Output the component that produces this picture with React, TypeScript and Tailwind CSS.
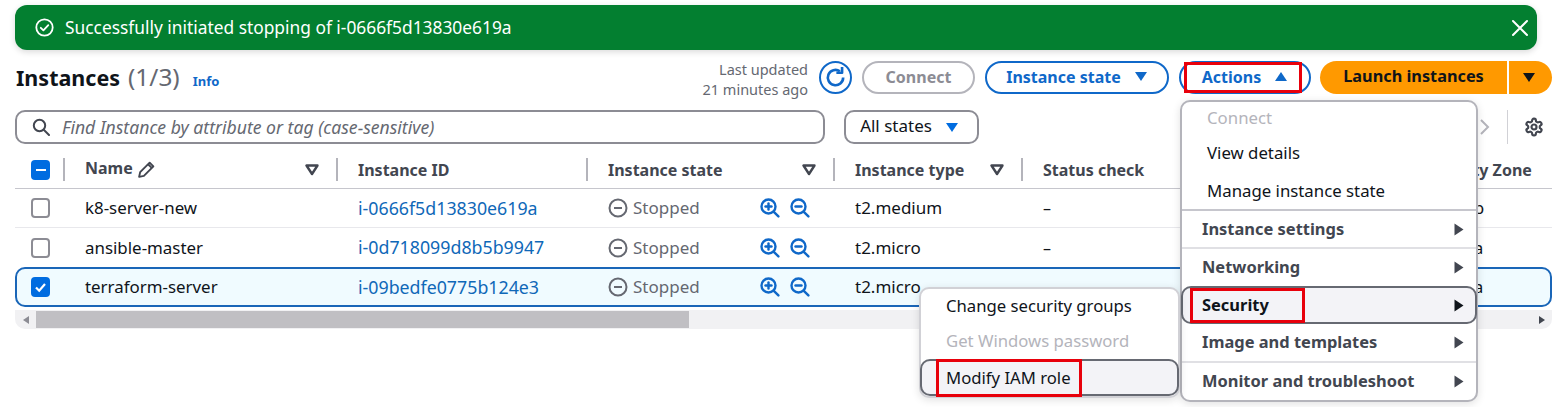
import React from "react";

const rows = [
  { name: "k8-server-new", id: "i-0666f5d13830e619a", type: "t2.medium", check: "–", zone: "us-east-1b" },
  { name: "ansible-master", id: "i-0d718099d8b5b9947", type: "t2.micro", check: "–", zone: "us-east-1a" },
  { name: "terraform-server", id: "i-09bedfe0775b124e3", type: "t2.micro", check: "", zone: "us-east-1a" },
];

const gridCols = "grid grid-cols-[49px_273px_250px_247px_188px_353px_177px]";

function Caret({ up = false, className = "" }: { up?: boolean; className?: string }) {
  return (
    <svg width="14" height="11" viewBox="0 0 14 11" className={className}>
      <path d={up ? "M7 1l6 9H1z" : "M1 1h12l-6 9z"} fill="currentColor" />
    </svg>
  );
}

function FilterIcon() {
  return (
    <svg width="14" height="12" viewBox="0 0 14 12" className="text-[#424650]">
      <path d="M1.5 1.5h11L7 10z" fill="none" stroke="currentColor" strokeWidth="2.4" strokeLinejoin="round" />
    </svg>
  );
}

function Zoom({ plus }: { plus?: boolean }) {
  return (
    <svg width="20" height="20" viewBox="0 0 20 20" fill="none" stroke="#0f68c9" strokeWidth="2.4" strokeLinecap="round">
      <circle cx="8.5" cy="8.5" r="7" />
      <path d="M13.8 13.8l4.6 4.6" />
      <path d="M5.5 8.5h6" />
      {plus && <path d="M8.5 5.5v6" />}
    </svg>
  );
}

function HeaderCell({ label, filter, pencil, divider = true }: { label: string; filter?: boolean; pencil?: boolean; divider?: boolean }) {
  return (
    <div className="flex items-center h-[25px]">
      {divider && <div className="w-[2px] h-[23px] bg-[#b4b4bb] -ml-px" />}
      <div className="flex flex-1 items-center justify-between pl-[20px] pr-[18px] min-w-0">
        <span className={`flex items-center gap-[4px] font-bold text-[#424650] text-[16px] whitespace-nowrap ${pencil ? "mb-[4px]" : ""} ${divider ? "" : "ml-[4px]"}`}>
          {label}
          {pencil && (
            <svg width="19" height="19" viewBox="0 0 18 18" fill="none" stroke="#424650" strokeWidth="1.8" strokeLinejoin="round" className="mt-[3px]">
              <path d="M2 16l1-4.5L12 2.5l3.5 3.5-9 9z" />
              <path d="M10.5 4l3.5 3.5" />
            </svg>
          )}
        </span>
        {filter && <FilterIcon />}
      </div>
    </div>
  );
}

function MenuItem({ label, height, size, bold, disabled, arrow, hover }: { label: string; height: string; size: string; bold?: boolean; disabled?: boolean; arrow?: boolean; hover?: boolean }) {
  return (
    <div
      className={`relative flex items-center justify-between ${height} ${size} ${
        hover ? "-mx-px rounded-[10px] border-2 border-[#424650]/80 bg-[#f3f3f7] z-10" : ""
      } ${bold ? (hover ? "font-bold pl-[19px] pr-[9px]" : "font-bold pl-[20px] pr-[10px]") : hover ? "pl-[24px] pr-[9px]" : "pl-[25px] pr-[10px]"} ${
        disabled ? "text-[#b4b4bb]" : bold ? "text-[#424650]" : "text-[#0f141a]"
      }`}
    >
      <span className={`whitespace-nowrap ${hover ? "text-[#0f141a]" : ""}`}>{label}</span>
      {arrow && <Caret className={`rotate-[-90deg] ${hover ? "text-[#0f141a]" : "text-[#424650]"}`} />}
    </div>
  );
}

function RedBox({ className }: { className: string }) {
  return <div className={`absolute border-[3px] border-[#e8000b] pointer-events-none z-30 ${className}`} />;
}

export default function App() {
  return (
    <div className="relative w-[1558px] h-[407px] overflow-hidden bg-white font-['Noto_Sans',sans-serif] text-[#0f141a] text-[16px]">
      <div className="pt-[5px] pl-[15px] pr-[6px]">
        {/* flash */}
        <div className="flex items-center justify-between h-[45px] w-[1522px] rounded-[12px] bg-[#037f30] pl-[20px] pr-[7px] text-white shadow-[0_2px_6px_rgba(0,0,0,0.15)]">
          <div className="flex items-center gap-[11px]">
            <svg width="19" height="19" viewBox="0 0 19 19" fill="none" stroke="white" strokeWidth="1.8" strokeLinecap="round" strokeLinejoin="round">
              <circle cx="9.5" cy="9.5" r="8.2" />
              <path d="M5.8 9.8l2.6 2.6 4.9-5.2" />
            </svg>
            <span className="text-[17.35px]">Successfully initiated stopping of i-0666f5d13830e619a</span>
          </div>
          <svg width="18" height="18" viewBox="0 0 18 18" stroke="white" strokeWidth="2" strokeLinecap="round" className="mr-[1px]">
            <path d="M2 2l14 14M16 2L2 16" />
          </svg>
        </div>

        {/* header */}
        <div className="flex items-center justify-between mt-[11px] h-[33px] pl-px">
          <div className="flex items-baseline pb-[2px]">
            <span className="text-[21.5px] font-bold leading-[33px]">Instances</span>
            <span className="text-[24.4px] text-[#656871] ml-[8px] leading-[33px]">(1/3)</span>
            <span className="text-[13px] font-bold text-[#0f68c9] ml-[13px]">Info</span>
          </div>
          <div className="flex items-center">
            <div className="text-right text-[14.5px] leading-[20px] text-[#656871] mr-[11px] mt-[3px]">
              <div>Last updated</div>
              <div>21 minutes ago</div>
            </div>
            <div className="flex items-center justify-center w-[33px] h-[33px] rounded-full border-2 border-[#0f68c9] mr-[10px]">
              <svg width="23" height="23" viewBox="0 0 21 21" fill="none" stroke="#0f68c9" strokeWidth="2.4">
                <path d="M17.5 10.5a7 7 0 1 1-3-5.7" />
                <path d="M16.5 1v5.2h-5.2" strokeLinejoin="round" />
              </svg>
            </div>
            <div className="flex items-center justify-center w-[113px] h-[33px] rounded-full border-2 border-[#b4b4bb] font-bold text-[#8c8c94] mr-[10px] pb-[2px]">Connect</div>
            <div className="flex items-center justify-center gap-[13px] w-[184px] h-[33px] rounded-full border-2 border-[#0f68c9] font-bold text-[#0f68c9] mr-[10px] pb-[2px]">
              Instance state <Caret />
            </div>
            <div className="flex items-center justify-center gap-[13px] w-[132px] h-[33px] rounded-full border-2 border-[#0f68c9] font-bold text-[#0f68c9] mr-[9px] pb-[2px]">
              Actions <Caret up />
            </div>
            <div className="flex items-center justify-center w-[187px] h-[33px] rounded-l-full bg-[#ff9900] font-bold text-[16.3px] pb-[2px]">Launch instances</div>
            <div className="flex items-center justify-center w-[43px] h-[33px] rounded-r-full bg-[#ff9900] ml-[2px] pr-[3px]">
              <Caret />
            </div>
          </div>
        </div>

        {/* filter */}
        <div className="flex items-center mt-[16px] h-[34px]">
          <div className="flex items-center w-[810px] h-[34px] rounded-[10px] border-2 border-[#8c8c94] pl-[15px]">
            <svg width="18" height="18" viewBox="0 0 18 18" fill="none" stroke="#424650" strokeWidth="2" strokeLinecap="round">
              <circle cx="7.5" cy="7.5" r="5.7" />
              <path d="M12 12l5 5" />
            </svg>
            <span className="italic text-[#656871] ml-[12px] text-[17.6px]">Find Instance by attribute or tag (case-sensitive)</span>
          </div>
          <div className="flex items-center justify-center gap-[13px] w-[135px] h-[34px] rounded-[10px] border-2 border-[#8c8c94] ml-[19px] text-[17px] pb-[2px] pr-[4px]">
            All states <Caret className="text-[#006ce0] mt-[2px]" />
          </div>
          <div className="flex items-center ml-auto mr-[8px]">
            <svg width="12" height="20" viewBox="0 0 12 20" fill="none" stroke="#b4b4bb" strokeWidth="2" className="mr-[16px]">
              <path d="M2 3l7 7-7 7" />
            </svg>
            <div className="w-px h-[34px] bg-[#d1d1d6] mr-[16px]" />
            <svg width="20" height="20" viewBox="0 0 24 24" fill="none" stroke="#424650" strokeWidth="2.6">
              <path d="M12.22 2h-.44a2 2 0 0 0-2 2v.18a2 2 0 0 1-1 1.73l-.43.25a2 2 0 0 1-2 0l-.15-.08a2 2 0 0 0-2.73.73l-.22.38a2 2 0 0 0 .73 2.73l.15.1a2 2 0 0 1 1 1.72v.51a2 2 0 0 1-1 1.74l-.15.09a2 2 0 0 0-.73 2.73l.22.38a2 2 0 0 0 2.73.73l.15-.08a2 2 0 0 1 2 0l.43.25a2 2 0 0 1 1 1.73V20a2 2 0 0 0 2 2h.44a2 2 0 0 0 2-2v-.18a2 2 0 0 1 1-1.73l.43-.25a2 2 0 0 1 2 0l.15.08a2 2 0 0 0 2.73-.73l.22-.39a2 2 0 0 0-.73-2.73l-.15-.08a2 2 0 0 1-1-1.74v-.5a2 2 0 0 1 1-1.74l.15-.09a2 2 0 0 0 .73-2.73l-.22-.38a2 2 0 0 0-2.73-.73l-.15.08a2 2 0 0 1-2 0l-.43-.25a2 2 0 0 1-1-1.73V4a2 2 0 0 0-2-2z" />
              <circle cx="12" cy="12" r="3" />
            </svg>
          </div>
        </div>

        {/* table */}
        <div className="mt-[12px] overflow-hidden">
          <div className={`${gridCols} items-center h-[33px] pb-[5px] border-b border-[#c6c6cd]`}>
            <div className="flex items-center pl-[16px]">
              <div className="flex items-center justify-center w-[19px] h-[20px] rounded-[4px] bg-[#006ce0]">
                <div className="w-[10px] h-[2px] bg-white" />
              </div>
            </div>
            <HeaderCell label="Name" pencil filter />
            <HeaderCell label="Instance ID" />
            <HeaderCell label="Instance state" filter />
            <HeaderCell label="Instance type" filter />
            <HeaderCell label="Status check" />
            <HeaderCell label="Availability Zone" divider={false} />
          </div>
          {rows.map((r, i) => {
            const selected = i === 2;
            return (
              <div
                key={r.id}
                className={`${gridCols} items-center ${
                  selected
                    ? "h-[40px] rounded-[10px] border-2 border-[#1a66b8] bg-[#f0fbff]"
                    : `h-[39px] ${i === 0 ? "border-b border-[#e8e8ec]" : ""}`
                }`}
              >
                <div className={`flex items-center pl-[16px] ${selected ? "-ml-[2px]" : ""}`}>
                  {selected ? (
                    <div className="flex items-center justify-center w-[19px] h-[20px] rounded-[4px] bg-[#006ce0]">
                      <svg width="13" height="11" viewBox="0 0 13 11" fill="none" stroke="white" strokeWidth="2.2">
                        <path d="M2 5.5l3.2 3.2L11 2" />
                      </svg>
                    </div>
                  ) : (
                    <div className="w-[19px] h-[20px] rounded-[4px] border-2 border-[#8c8c94] bg-white" />
                  )}
                </div>
                <div className={`pl-[21px] whitespace-nowrap text-[16.9px] ${selected ? "-ml-[2px]" : ""}`}>{r.name}</div>
                <div className={`pl-[21px] text-[#0f68b8] whitespace-nowrap text-[17.8px] ${selected ? "-ml-[2px]" : ""}`}>{r.id}</div>
                <div className={`flex items-center pl-[21px] ${selected ? "-ml-[2px]" : ""}`}>
                  <svg width="20" height="20" viewBox="0 0 20 20" fill="none" stroke="#656871" strokeWidth="2">
                    <circle cx="10" cy="10" r="8.5" />
                    <path d="M6 10h8" />
                  </svg>
                  <span className="ml-[5px] text-[#656871] text-[17px] w-[127px]">Stopped</span>
                  <div className="flex gap-[10px]">
                    <Zoom plus />
                    <Zoom />
                  </div>
                </div>
                <div className={`pl-[21px] text-[17px] ${selected ? "-ml-[2px]" : ""}`}>{r.type}</div>
                <div className={`pl-[21px] ${selected ? "-ml-[2px]" : ""}`}>{r.check}</div>
                <div className={`pl-[26px] whitespace-nowrap text-[17px] ${selected ? "-ml-[2px]" : ""}`}>{r.zone}</div>
              </div>
            );
          })}

          {/* horizontal scrollbar */}
          <div className="flex items-center h-[19px] mt-[3px] rounded-b-[10px] bg-[#f1f1f3]">
            <div className="w-[21px] flex justify-center text-[#8c8c94]">
              <svg width="6" height="8" viewBox="0 0 6 8"><path d="M6 0v8L0 4z" fill="currentColor" /></svg>
            </div>
            <div className="w-[653px] h-[17px] bg-[#c0bfc3]" />
            <div className="ml-auto w-[21px] flex justify-center text-[#424650]">
              <svg width="6" height="8" viewBox="0 0 6 8"><path d="M0 0v8l6-4z" fill="currentColor" /></svg>
            </div>
          </div>
        </div>
      </div>

      {/* actions menu */}
      <div className="absolute left-[1180px] top-[100px] w-[298px] h-[302px] rounded-[10px] border-2 border-[#b4b4bb] bg-white z-20 shadow-[0_2px_8px_rgba(0,0,0,0.12)]">
        <MenuItem label="Connect" height="h-[32px]" size="text-[16.8px]" disabled />
        <MenuItem label="View details" height="h-[38px]" size="text-[16.8px]" />
        <MenuItem label="Manage instance state" height="h-[37px]" size="text-[16.8px]" />
        <div className="h-[2px] bg-[#c6c6cd]" />
        <MenuItem label="Instance settings" height="h-[36px]" size="text-[16.45px]" bold arrow />
        <div className="h-[2px] bg-[#e0e0e4]" />
        <MenuItem label="Networking" height="h-[37px]" size="text-[16.45px]" bold arrow />
        <MenuItem label="Security" height="h-[38px]" size="text-[16.45px]" bold arrow hover />
        <MenuItem label="Image and templates" height="h-[37px]" size="text-[16.45px]" bold arrow />
        <div className="h-[2px] bg-[#e0e0e4]" />
        <MenuItem label="Monitor and troubleshoot" height="h-[37px]" size="text-[16.45px]" bold arrow />
      </div>

      {/* security submenu */}
      <div className="absolute left-[919px] top-[287px] w-[261px] h-[111px] rounded-[10px] border-2 border-[#d1d1d6] bg-white z-20 shadow-[0_2px_8px_rgba(0,0,0,0.12)]">
        <MenuItem label="Change security groups" height="h-[33px]" size="text-[16.7px]" />
        <MenuItem label="Get Windows password" height="h-[37px]" size="text-[16.7px]" disabled />
        <MenuItem label="Modify IAM role" height="h-[37px]" size="text-[16.7px]" hover />
      </div>

      {/* red annotations */}
      <RedBox className="left-[1184px] top-[62px] w-[118px] h-[31px]" />
      <RedBox className="left-[1190px] top-[288px] w-[115px] h-[35px]" />
      <RedBox className="left-[936px] top-[359px] w-[146px] h-[38px]" />
    </div>
  );
}
